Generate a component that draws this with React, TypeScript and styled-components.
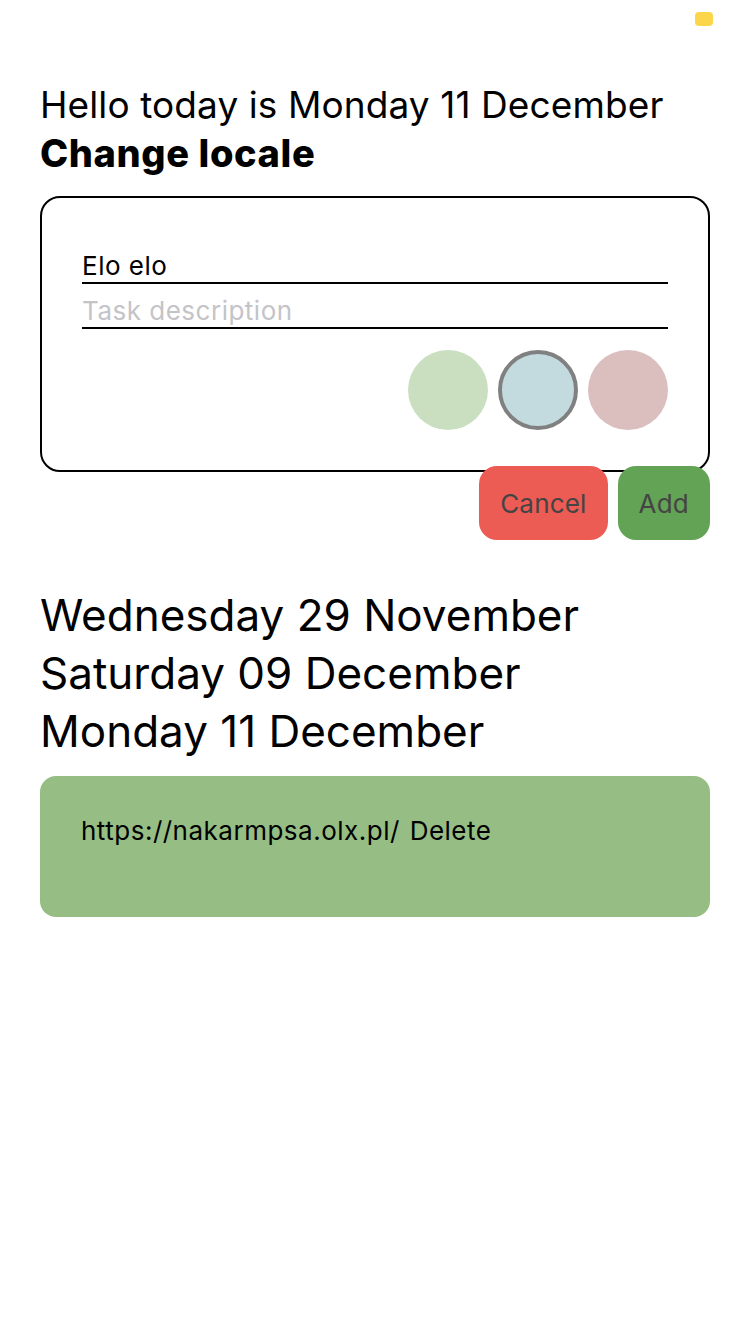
import React from "react";
import styled, { createGlobalStyle } from "styled-components";

const GlobalStyle = createGlobalStyle`
    html, body {
        margin: 0;
        padding: 0;
        background: #ffffff;
        font-family: Inter, "Liberation Sans", sans-serif;
        color: #000000;
    }
`;

const swatches = [
    { color: "#c9dfc0", selected: false },
    { color: "#c3dadf", selected: true },
    { color: "#dbbfbf", selected: false },
];

const dates = ["Wednesday 29 November", "Saturday 09 December", "Monday 11 December"];

const App: React.FC = () => {
    return (
        <Page>
            <GlobalStyle />
            <TopBar>
                <Badge />
            </TopBar>
            <Greeting>Hello today is Monday 11 December</Greeting>
            <LocaleLink>Change locale</LocaleLink>

            <FormCard>
                <Field value="Elo elo" readOnly />
                <Field placeholder="Task description" />
                <Swatches>
                    {swatches.map((s) => (
                        <Swatch key={s.color} $color={s.color} $selected={s.selected} />
                    ))}
                </Swatches>
            </FormCard>
            <Actions>
                <ActionButton $bg="#ec5b54">Cancel</ActionButton>
                <ActionButton $bg="#62a355">Add</ActionButton>
            </Actions>

            <DateList>
                {dates.map((d) => (
                    <DateItem key={d}>{d}</DateItem>
                ))}
            </DateList>

            <TaskCard>
                <TaskText>
                    https://nakarmpsa.olx.pl/ <span>Delete</span>
                </TaskText>
            </TaskCard>
        </Page>
    );
};

const Page = styled.div`
    padding: 0 40px 40px;
    display: flex;
    flex-direction: column;
`;

const TopBar = styled.div`
    height: 83px;
    margin-right: -3px;
    padding-top: 12px;
    box-sizing: border-box;
    display: flex;
    justify-content: flex-end;
`;

const Badge = styled.div`
    width: 18px;
    height: 14px;
    border-radius: 4px;
    background: #fcd64a;
`;

const Greeting = styled.div`
    font-size: 37px;
    line-height: 44px;
    letter-spacing: 0.1px;
`;

const LocaleLink = styled.div`
    margin-top: 3px;
    font-size: 38px;
    line-height: 46px;
    font-weight: 800;
    letter-spacing: 0.6px;
`;

const FormCard = styled.div`
    margin-top: 20px;
    border: 2px solid #000000;
    border-radius: 20px;
    padding: 41px 40px 40px;
    display: flex;
    flex-direction: column;
`;

const Field = styled.input`
    height: 45px;
    box-sizing: border-box;
    border: none;
    border-bottom: 2px solid #000000;
    padding: 9px 0 0;
    outline: none;
    font-family: inherit;
    font-size: 26px;
    letter-spacing: 0.5px;
    color: #000000;
    background: transparent;

    &::placeholder {
        color: #c4c4c8;
    }
`;

const Swatches = styled.div`
    margin-top: 21px;
    display: flex;
    justify-content: flex-end;
    gap: 10px;
`;

const Swatch = styled.div<{ $color: string; $selected: boolean }>`
    width: 80px;
    height: 80px;
    box-sizing: border-box;
    border-radius: 50%;
    background: ${(p) => p.$color};
    border: ${(p) => (p.$selected ? "4px solid #808080" : "none")};
`;

const Actions = styled.div`
    margin-top: -6px;
    display: flex;
    justify-content: flex-end;
    gap: 10px;
`;

const ActionButton = styled.button<{ $bg: string }>`
    height: 74px;
    padding: 0 21px;
    border: none;
    border-radius: 18px;
    background: ${(p) => p.$bg};
    color: #444444;
    font-family: inherit;
    font-size: 26px;
    letter-spacing: 0.2px;
`;

const DateList = styled.div`
    margin-top: 46px;
    display: flex;
    flex-direction: column;
`;

const DateItem = styled.div`
    font-size: 44px;
    line-height: 58px;
`;

const TaskCard = styled.div`
    margin-top: 16px;
    height: 141px;
    box-sizing: border-box;
    border-radius: 16px;
    background: #96bd83;
    padding: 38px 41px;
`;

const TaskText = styled.div`
    font-size: 26px;
    line-height: 34px;
    letter-spacing: 0.5px;

    span {
        margin-left: 2px;
    }
`;

export default App;
